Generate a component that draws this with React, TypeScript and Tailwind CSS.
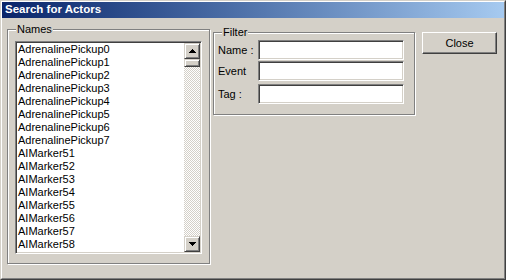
import React from "react";

const items = [
  "AdrenalinePickup0",
  "AdrenalinePickup1",
  "AdrenalinePickup2",
  "AdrenalinePickup3",
  "AdrenalinePickup4",
  "AdrenalinePickup5",
  "AdrenalinePickup6",
  "AdrenalinePickup7",
  "AIMarker51",
  "AIMarker52",
  "AIMarker53",
  "AIMarker54",
  "AIMarker55",
  "AIMarker56",
  "AIMarker57",
  "AIMarker58",
  "AIMarker59",
];

function ScrollBtn({ up }: { up: boolean }) {
  return (
    <div className="w-[16px] h-[16px] bg-[#D4D0C8] border border-t-[#D4D0C8] border-l-[#D4D0C8] border-r-[#404040] border-b-[#404040] shadow-[inset_1px_1px_0_#ffffff,inset_-1px_-1px_0_#808080] flex items-center justify-center">
      <svg width="7" height="4" viewBox="0 0 7 4">
        {up ? (
          <path d="M3 0h1v1h1v1h1v1h1v1H0V3h1V2h1V1h1z" fill="#000" />
        ) : (
          <path d="M0 0h7v1H6v1H5v1H4v1H3V3H2V2H1V1H0z" fill="#000" />
        )}
      </svg>
    </div>
  );
}

function Field() {
  return (
    <div className="w-[146px] h-[20px] bg-white border border-t-[#808080] border-l-[#808080] border-r-white border-b-white shadow-[inset_1px_1px_0_#404040,inset_-1px_-1px_0_#D4D0C8]" />
  );
}

export default function App() {
  return (
    <div className="w-[506px] h-[280px] bg-[#D4D0C8] border border-t-[#D4D0C8] border-l-[#D4D0C8] border-r-[#404040] border-b-[#404040] font-['Liberation_Sans',Arial,sans-serif] text-[11px] text-black overflow-hidden">
      <div className="w-full h-full border border-t-white border-l-white border-r-[#808080] border-b-[#808080]">
        <div className="h-[16px] bg-gradient-to-r from-[#0A246A] to-[#A6CAF0] flex items-center pl-[3px]">
          <span className="text-white font-bold text-[11.5px] leading-none">Search for Actors</span>
        </div>
        <div className="flex items-start pl-[5px]">
          {/* Names */}
          <div className="relative mt-[11px] w-[203px] h-[235px] border border-[#808080] shadow-[inset_1px_1px_0_#ffffff,1px_1px_0_#ffffff] pl-[7px] pt-[11px]">
            <span className="absolute left-[8px] top-[-7px] px-[1px] bg-[#D4D0C8] leading-[13px]">Names</span>
            <div className="w-[187px] h-[213px] bg-white border border-t-[#808080] border-l-[#808080] border-r-white border-b-white shadow-[inset_1px_1px_0_#404040,inset_-1px_-1px_0_#D4D0C8] p-[1px] flex">
              <div className="flex-1 overflow-hidden pl-[1px]">
                {items.map((it) => (
                  <div key={it} className="h-[13px] leading-[13px] whitespace-nowrap">
                    {it}
                  </div>
                ))}
              </div>
              <div className="w-[16px] flex flex-col">
                <ScrollBtn up />
                <div className="w-[16px] h-[8px] bg-[#D4D0C8] border border-t-[#D4D0C8] border-l-[#D4D0C8] border-r-[#404040] border-b-[#404040] shadow-[inset_1px_1px_0_#ffffff,inset_-1px_-1px_0_#808080]" />
                <div className="flex-1 bg-[image:repeating-conic-gradient(#D4D0C8_0_25%,#ffffff_0_50%)] bg-[length:2px_2px]" />
                <ScrollBtn up={false} />
              </div>
            </div>
          </div>
          {/* Filter */}
          <div className="relative ml-[3px] mt-[14px] w-[202px] h-[83px] border border-[#808080] shadow-[inset_1px_1px_0_#ffffff,1px_1px_0_#ffffff] pl-[4px] pt-[7px] pr-[10px] flex flex-col">
            <span className="absolute left-[8px] top-[-7px] px-[1px] bg-[#D4D0C8] leading-[13px]">Filter</span>
            <div className="flex items-center justify-between">
              <span>Name :</span>
              <Field />
            </div>
            <div className="flex items-center justify-between mt-[1px]">
              <span>Event</span>
              <Field />
            </div>
            <div className="flex items-center justify-between mt-[3px]">
              <span>Tag :</span>
              <Field />
            </div>
          </div>
          {/* Close */}
          <div className="ml-[7px] mt-[14px] w-[75px] h-[22px] bg-[#D4D0C8] border border-t-white border-l-white border-r-[#404040] border-b-[#404040] shadow-[inset_-1px_-1px_0_#808080] flex items-center justify-center">
            Close
          </div>
        </div>
      </div>
    </div>
  );
}
